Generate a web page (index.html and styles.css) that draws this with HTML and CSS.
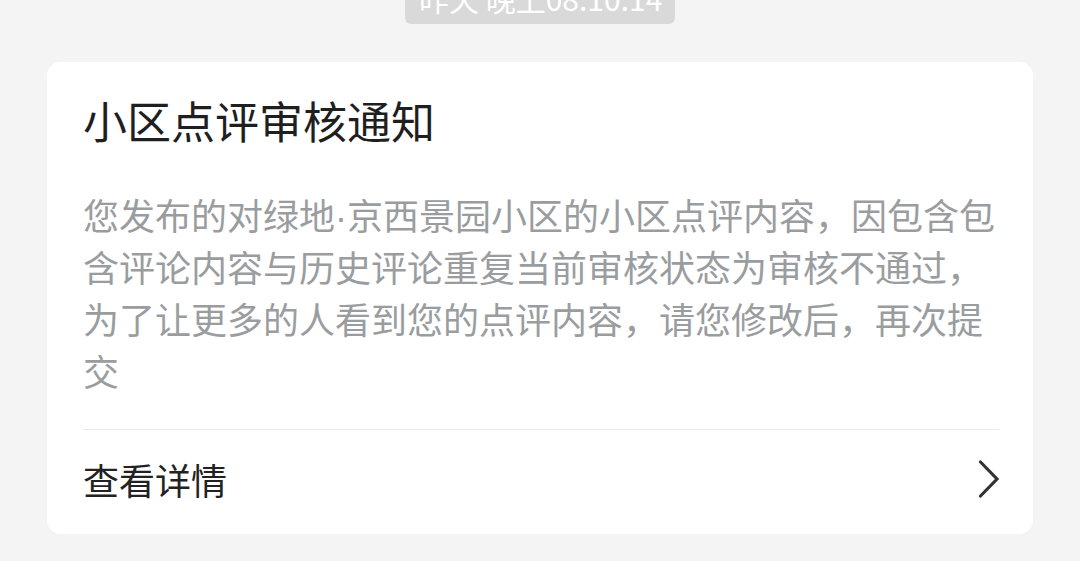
FILE: index.html
```html
<!DOCTYPE html>
<html lang="zh-CN">
<head>
<meta charset="utf-8">
<link rel="stylesheet" href="styles.css">
</head>
<body>
<div class="time-row"><span class="time-badge">昨天 晚上08:10:14</span></div>
<div class="card">
  <div class="title">小区点评审核通知</div>
  <div class="content">您发布的对绿地<span class="dot">·</span>京西景园小区的小区点评内容，因包含包含评论内容与历史评论重复当前审核状态为审核不通过，为了让更多的人看到您的点评内容，请您修改后，再次提交</div>
  <div class="divider"></div>
  <div class="detail-row">
    <span class="detail-text">查看详情</span>
    <svg class="chevron" width="22" height="40" viewBox="0 0 22 40"><path d="M2.5 3 L19 20 L2.5 37" fill="none" stroke="#333" stroke-width="3.2" stroke-linecap="round" stroke-linejoin="miter"/></svg>
  </div>
</div>
</body>
</html>
```
FILE: styles.css
```css
html, body {
  margin: 0;
  padding: 0;
  background: #f4f4f4;
  font-family: "Noto Sans CJK SC", "Noto Sans", sans-serif;
}
.time-row {
  display: flex;
  justify-content: center;
}
.time-badge {
  margin-top: -20px;
  height: 44px;
  line-height: 36px;
  padding: 0 14px;
  width: 242px;
  text-align: center;
  background: #d9d9d9;
  color: #ffffff;
  font-size: 30px;
  border-radius: 6px;
  white-space: nowrap;
  overflow: hidden;
}
.card {
  margin: 38px 47px 0 47px;
  background: #ffffff;
  border-radius: 14px;
  padding: 28px 34px 6px 36px;
}
.title {
  font-size: 44px;
  line-height: 60px;
  color: #1f1f1f;
}
.content {
  margin-top: 38px;
  font-size: 36px;
  line-height: 52px;
  color: #9a9da0;
  word-break: break-all;
}
.dot {
  font-family: "Liberation Sans", sans-serif;
  line-height: 0;
}
.divider {
  margin-top: 33px;
  height: 1px;
  background: #ebebeb;
}
.detail-row {
  height: 98px;
  display: flex;
  align-items: center;
  justify-content: space-between;
}
.detail-text {
  font-size: 36px;
  color: #222222;
}
.chevron {
  margin-right: -1px;
}
```
